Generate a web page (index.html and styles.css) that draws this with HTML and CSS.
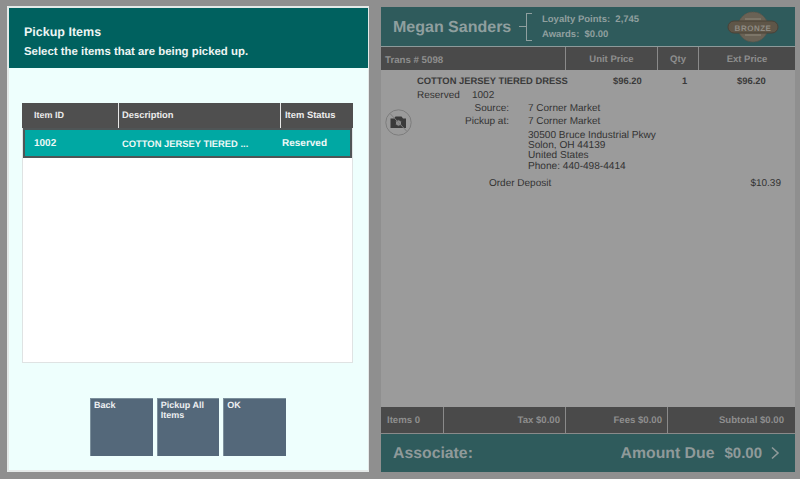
FILE: index.html
```html
<!DOCTYPE html>
<html lang="en">
<head>
<meta charset="utf-8">
<title>Pickup Items</title>
<link rel="stylesheet" href="styles.css">
</head>
<body>
<div class="screen">
  <section class="dialog">
    <header class="dialog-head">
      <h1>Pickup Items</h1>
      <p>Select the items that are being picked up.</p>
    </header>
    <div class="dialog-body">
      <div class="grid">
        <div class="grid-head">
          <div class="gh-id">Item ID</div>
          <div class="gh-desc">Description</div>
          <div class="gh-status">Item Status</div>
        </div>
        <div class="grid-row">
          <div class="gr-id">1002</div>
          <div class="gr-desc">COTTON JERSEY TIERED ...</div>
          <div class="gr-status">Reserved</div>
        </div>
      </div>
      <div class="buttons">
        <div class="btn">Back</div>
        <div class="btn">Pickup All Items</div>
        <div class="btn">OK</div>
      </div>
    </div>
  </section>
  <section class="receipt">
    <header class="cust">
      <div class="cust-name">Megan Sanders</div>
      <div class="tick"></div>
      <div class="bracket"></div>
      <div class="loyalty">
        <div>Loyalty Points:&nbsp; 2,745</div>
        <div>Awards:&nbsp; $0.00</div>
      </div>
      <svg class="badge" width="52" height="32" viewBox="0 0 52 32">
        <circle cx="26" cy="16" r="15" fill="#6a6255" stroke="#5d5549" stroke-dasharray="1.5 1"/>
        <path d="M18 8h16M20 11h12M20 21h12M18 24h16" stroke="#8f897c" stroke-width="1" fill="none"/>
        <rect x="1" y="10" width="50" height="12" rx="6" fill="#5f5648" stroke="#4a4237"/>
        <text x="26" y="19.5" text-anchor="middle" class="badge-text">BRONZE</text>
      </svg>
    </header>
    <div class="thead">
      <div class="th th-trans">Trans # 5098</div>
      <div class="th th-price">Unit Price</div>
      <div class="th th-qty">Qty</div>
      <div class="th th-ext">Ext Price</div>
    </div>
    <div class="tbody">
      <div class="line-main">
        <div class="item-name">COTTON JERSEY TIERED DRESS</div>
        <div class="item-price">$96.20</div>
        <div class="item-qty">1</div>
        <div class="item-ext">$96.20</div>
      </div>
      <div class="line-sub"><span class="res">Reserved</span><span>1002</span></div>
      <div class="line-detail">
        <svg class="nophoto" width="27" height="27" viewBox="0 0 27 27">
          <circle cx="13.5" cy="13.5" r="12.7" fill="none" stroke="#7d7d7d" stroke-width="1"/>
          <path d="M5.500 9.500h3.500l1.500-2h6l1.500 2h3v9.500h-15.500z" fill="#3a3a3a"/>
          <circle cx="13.500" cy="14" r="3.200" fill="#8a8a8a" stroke="#3a3a3a"/>
          <path d="M5 4.5 22 22.5" stroke="#7d7d7d" stroke-width="1"/>
        </svg>
        <div class="kv"><span class="k">Source:</span><span>7 Corner Market</span></div>
        <div class="kv"><span class="k">Pickup at:</span><span>7 Corner Market</span></div>
        <div class="addr">
          <div>30500 Bruce Industrial Pkwy</div>
          <div>Solon, OH 44139</div>
          <div>United States</div>
          <div>Phone: 440-498-4414</div>
        </div>
      </div>
      <div class="deposit"><span>Order Deposit</span><span>$10.39</span></div>
    </div>
    <div class="totals">
      <div class="t t-items">Items 0</div>
      <div class="t t-tax">Tax $0.00</div>
      <div class="t t-fees">Fees $0.00</div>
      <div class="t t-sub">Subtotal $0.00</div>
    </div>
    <footer class="due">
      <div class="assoc">Associate:</div>
      <div class="amount"><span class="amount-label">Amount Due</span><span class="amount-value">$0.00</span></div>
      <svg class="chev" width="10" height="14" viewBox="0 0 10 14"><path d="M2 1.500 8 7 2 12.500" fill="none" stroke="#8f9a9a" stroke-width="1.600"/></svg>
    </footer>
  </section>
</div>
</body>
</html>
```
FILE: styles.css
```css
* { box-sizing: border-box; }
html, body { margin: 0; height: 100%; }
body { background: #8f8f8f; font-family: "Liberation Sans", Arial, sans-serif; overflow: hidden; text-rendering: geometricPrecision; }
.screen { display: flex; width: 800px; height: 479px; padding: 6px 4px 6px 7px; gap: 12px; }

.dialog { width: 362px; height: 466px; border: 2px solid #e4e9e8; border-right-width: 1px; background: #eefffd; display: flex; flex-direction: column; }
.dialog-head { height: 60px; background: #00615f; color: #eef5f4; padding: 17px 0 0 15px; flex: none; }
.dialog-head h1 { margin: 0; font-size: 12.5px; line-height: 15px; font-weight: 700; }
.dialog-head p { margin: 5px 0 0; font-size: 11.400px; line-height: 14px; font-weight: 700; }
.dialog-body { flex: 1; display: flex; flex-direction: column; padding: 35px 15px 14px 13px; }
.grid { height: 260px; background: #fff; border: 1px solid #dfe3e3; border-top: 0; }
.grid-head { display: flex; height: 25px; background: #4f4f4f; color: #ececec; font-size: 9.400px; font-weight: 700; line-height: 24px; margin: 0 -1px; }
.gh-id { width: 97px; padding-left: 12px; border-right: 1px solid #e8e8e8; font-size: 9px; }
.gh-desc { width: 162px; padding-left: 3px; border-right: 1px solid #e8e8e8; }
.gh-status { flex: 1; padding-left: 4px; white-space: nowrap; }
.grid-row { display: flex; height: 30px; background: #00a8a3; border: 2px solid #4f5556; color: #eef8f7; font-size: 10px; font-weight: 700; line-height: 28px; }
.gr-id { width: 97px; padding-left: 9px; }
.gr-desc { width: 160px; white-space: nowrap; font-size: 9.400px; }
.gr-status { flex: 1; }
.buttons { display: flex; justify-content: center; gap: 4px; margin-top: 35px; padding-left: 1px; }
.btn { width: 62.600px; height: 58px; background: #54687a; border: 1px solid #7c909c; border-bottom: 0; border-right: 0; color: #eef0f2; font-size: 9px; font-weight: 700; line-height: 10px; padding: 1px 3px; }

.receipt { width: 414px; height: 465px; margin-top: 1px; background: #9b9b9b; display: flex; flex-direction: column; color: #333; }
.cust { height: 40px; flex: none; background: #2f5b5c; display: flex; align-items: center; color: #8f9f9f; border-bottom: 1px solid #8d9a9a; }
.cust-name { font-size: 16px; font-weight: 700; margin-left: 12px; width: 124px; white-space: nowrap; padding-top: 2px; }
.tick { width: 7px; border-top: 1px solid #8f9f9f; margin-left: 2px; }
.bracket { width: 6px; height: 28px; border: 1px solid #8f9f9f; border-right: 0; }
.loyalty { font-size: 9.500px; font-weight: 700; line-height: 15px; margin-left: 10px; width: 184px; }
.badge { flex: none; margin-left: 1px; }
.badge-text { font-size: 8px; font-weight: 700; fill: #8f8c84; letter-spacing: .5px; font-family: "Liberation Sans", Arial, sans-serif; }
.thead { height: 23px; flex: none; display: flex; background: #4a4a4a; color: #8e8e8e; font-size: 9.500px; font-weight: 700; line-height: 26px; }
.th { border-right: 1px solid #8a8a8a; text-align: center; }
.th-trans { width: 185px; text-align: left; padding: 1px 0 0 4px; font-size: 9.700px; }
.th-price { width: 92px; }
.th-qty { width: 41px; }
.th-ext { flex: 1; border-right: 0; }
.tbody { flex: 1; font-size: 10px; line-height: 11px; padding-top: 5px; }
.line-main { display: flex; font-weight: 700; font-size: 9.400px; height: 14px; color: #3a3a3a; }
.item-name { margin-left: 36px; width: 196px; white-space: nowrap; }
.item-price { width: 67px; }
.item-qty { width: 57px; padding-left: 2px; }
.line-sub { display: flex; margin: 1px 0 0 36px; height: 13px; }
.res { width: 55px; }
.line-detail { position: relative; }
.nophoto { position: absolute; left: 4px; top: 6px; }
.kv { display: flex; height: 13px; }
.k { width: 128px; text-align: right; margin-right: 19px; }
.addr { margin-left: 147px; line-height: 10.200px; margin-top: 2px; font-size: 10.100px; }
.deposit { display: flex; justify-content: space-between; margin: 6px 0 0 108px; padding-right: 14px; }
.totals { height: 27px; flex: none; display: flex; background: #4a4a4a; color: #8e8e8e; font-size: 9.600px; font-weight: 700; line-height: 27px; border-bottom: 1px solid #8a8a8a; }
.t { border-right: 1px solid #8a8a8a; text-align: right; padding-right: 5px; }
.t-items { width: 63px; text-align: left; padding-left: 6px; }
.t-tax { width: 122px; }
.t-fees { width: 102px; }
.t-sub { flex: 1; border-right: 0; padding-right: 11px; }
.due { height: 38px; flex: none; background: #2f5b5c; display: flex; align-items: center; color: #8f9a9a; font-size: 15.800px; font-weight: 700; }
.assoc { margin-left: 12px; padding-top: 2px; }
.amount { margin-left: auto; display: flex; gap: 10px; padding-top: 2px; }
.amount-value { font-size: 15px; }
.chev { margin: 0 15px 0 8px; }
```
